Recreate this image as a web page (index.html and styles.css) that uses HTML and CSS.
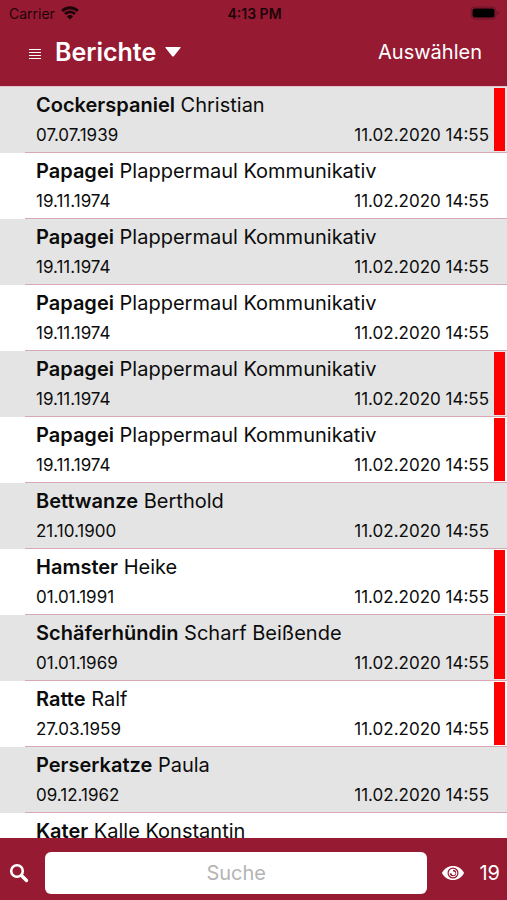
FILE: index.html
```html
<!DOCTYPE html>
<html lang="de">
<head>
<meta charset="utf-8">
<meta name="viewport" content="width=device-width, initial-scale=1">
<title>Berichte</title>
<link rel="stylesheet" href="styles.css">
</head>
<body>
<header class="top">
  <div class="status">
    <span class="carrier">Carrier
      <svg class="wifi" viewBox="0 0 18 14" aria-hidden="true"><path d="M1.200 5a11 11 0 0 1 15.600 0M4 8a7 7 0 0 1 10 0" fill="none" stroke="currentColor" stroke-width="2.800"/><path d="M9 13.600 5.900 10.400a4.400 4.400 0 0 1 6.200 0z" fill="currentColor"/></svg>
    </span>
    <span class="clock">4:13 PM</span>
    <svg class="battery" viewBox="0 0 30 14" aria-hidden="true"><rect x="1" y="1" width="25" height="12" rx="4" fill="none" stroke="#6b1226" stroke-width="1"/><rect x="2.500" y="2.500" width="22" height="9" rx="2.500" fill="#000"/><path d="M27.500 5v4q1.500-.5 1.500-2t-1.500-2z" fill="#6b1226"/></svg>
  </div>
  <nav class="bar">
    <button class="menu" aria-label="Menü"><svg viewBox="0 0 14 12" aria-hidden="true"><path d="M1 1.500h12M1 4.500h12M1 7.500h12M1 10.500h12" stroke="currentColor" stroke-width="1.200"/></svg></button>
    <button class="title">Berichte <svg viewBox="0 0 16 10" aria-hidden="true"><path d="M1 0h14q1.200 0 .4 1L9 9q-1 1-2 0L.6 1Q-.2 0 1 0z" fill="currentColor"/></svg></button>
    <button class="select">Auswählen</button>
  </nav>
</header>
<main class="list">
  <ul>
    <li class="row flag"><div class="cell"><p class="name"><b>Cockerspaniel</b> Christian</p><p class="meta"><span>07.07.1939</span><span>11.02.2020 14:55</span></p></div></li>
    <li class="row"><div class="cell"><p class="name"><b>Papagei</b> Plappermaul Kommunikativ</p><p class="meta"><span>19.11.1974</span><span>11.02.2020 14:55</span></p></div></li>
    <li class="row"><div class="cell"><p class="name"><b>Papagei</b> Plappermaul Kommunikativ</p><p class="meta"><span>19.11.1974</span><span>11.02.2020 14:55</span></p></div></li>
    <li class="row"><div class="cell"><p class="name"><b>Papagei</b> Plappermaul Kommunikativ</p><p class="meta"><span>19.11.1974</span><span>11.02.2020 14:55</span></p></div></li>
    <li class="row flag"><div class="cell"><p class="name"><b>Papagei</b> Plappermaul Kommunikativ</p><p class="meta"><span>19.11.1974</span><span>11.02.2020 14:55</span></p></div></li>
    <li class="row flag"><div class="cell"><p class="name"><b>Papagei</b> Plappermaul Kommunikativ</p><p class="meta"><span>19.11.1974</span><span>11.02.2020 14:55</span></p></div></li>
    <li class="row"><div class="cell"><p class="name"><b>Bettwanze</b> Berthold</p><p class="meta"><span>21.10.1900</span><span>11.02.2020 14:55</span></p></div></li>
    <li class="row flag"><div class="cell"><p class="name"><b>Hamster</b> Heike</p><p class="meta"><span>01.01.1991</span><span>11.02.2020 14:55</span></p></div></li>
    <li class="row flag"><div class="cell"><p class="name"><b>Schäferhündin</b> Scharf Beißende</p><p class="meta"><span>01.01.1969</span><span>11.02.2020 14:55</span></p></div></li>
    <li class="row flag"><div class="cell"><p class="name"><b>Ratte</b> Ralf</p><p class="meta"><span>27.03.1959</span><span>11.02.2020 14:55</span></p></div></li>
    <li class="row"><div class="cell"><p class="name"><b>Perserkatze</b> Paula</p><p class="meta"><span>09.12.1962</span><span>11.02.2020 14:55</span></p></div></li>
    <li class="row"><div class="cell"><p class="name"><b>Kater</b> Kalle Konstantin</p></div></li>
  </ul>
</main>
<footer class="bottom">
  <label for="search" aria-label="Suche"><svg class="loupe" viewBox="0 0 20 20" aria-hidden="true"><circle cx="8" cy="8" r="5.800" fill="none" stroke="currentColor" stroke-width="2.600"/><path d="m12.500 12.500 5 5" stroke="currentColor" stroke-width="3.400" stroke-linecap="round"/></svg></label>
  <input id="search" type="text" placeholder="Suche">
  <button class="count"><svg viewBox="0 0 22 14" aria-hidden="true"><path d="M11 0C6.200 0 2.400 2.700.3 6.300q-.4.700 0 1.400C2.400 11.300 6.200 14 11 14s8.600-2.700 10.700-6.300q.4-.7 0-1.400C19.600 2.700 15.800 0 11 0z" fill="currentColor"/><circle cx="11" cy="7" r="4.900" fill="none" stroke="#971a33" stroke-width="1.200"/><path d="M11 3.800a3.200 3.200 0 1 1-3.200 3.200q2.200 1 3-.4t.2-2.800z" fill="#971a33"/><circle cx="11.500" cy="7.300" r="1.900" fill="currentColor"/></svg><span>19</span></button>
</footer>
</body>
</html>
```
FILE: styles.css
```css
* { box-sizing: border-box; }

body {
  margin: 0;
  height: 100vh;
  display: flex;
  flex-direction: column;
  background: #fff;
  color: #0c0c0c;
  font-family: Inter, "Liberation Sans", sans-serif;
}

button {
  border: 0;
  padding: 0;
  background: none;
  color: inherit;
  font: inherit;
}

svg { display: block; }

.top {
  flex: none;
  background: #971a33;
  color: #fff;
  border-bottom: 1px solid #e3c3c9;
}

.status {
  display: grid;
  grid-template-columns: 1fr auto 1fr;
  align-items: center;
  height: 26px;
  padding: 0 7px 0 9px;
  color: #1c0509;
  font-size: 14px;
}

.carrier {
  display: flex;
  align-items: center;
  gap: 6px;
}

.wifi { width: 18px; height: 14px; }

.clock { font-weight: 600; }

.battery {
  width: 30px;
  height: 14px;
  justify-self: end;
}

.bar {
  display: flex;
  align-items: center;
  height: 60px;
  padding: 0 25px 8px 28px;
}

.menu { padding-top: 4px; }

.menu svg { width: 14px; height: 12px; }

.title {
  display: flex;
  align-items: center;
  gap: 9px;
  margin-left: 13px;
  font-size: 25px;
  font-weight: 600;
}

.title svg { width: 16px; height: 10px; }

.select {
  margin-left: auto;
  font-size: 20px;
}

.list {
  flex: 1;
  min-height: 0;
  overflow: hidden;
}

.list ul {
  margin: 0;
  padding: 0;
  list-style: none;
}

.row {
  position: relative;
  padding-left: 25px;
}

.row:nth-child(odd) { background: #e4e4e4; }

.cell {
  padding: 5px 18px 5px 11px;
  border-bottom: 1px solid #d8a9b2;
}

.name, .meta { margin: 0; }

.name {
  font-size: 20px;
  line-height: 26px;
}

.name b { font-weight: 600; }

.meta {
  display: flex;
  justify-content: space-between;
  padding-top: 5px;
  font-size: 17px;
  line-height: 24px;
}

.flag::after {
  content: "";
  position: absolute;
  top: 1px;
  right: 2px;
  bottom: 2px;
  width: 11px;
  background: #f00;
}

.bottom {
  flex: none;
  display: flex;
  align-items: center;
  height: 62px;
  padding: 7px 7px 0 9px;
  background: #971a33;
  color: #fff;
}

.loupe { width: 20px; height: 20px; }

.bottom input {
  flex: 1;
  min-width: 0;
  height: 42px;
  margin: 0 15px 0 16px;
  padding: 0 8px;
  border: 0;
  border-radius: 6px;
  background: #fff;
  color: #0c0c0c;
  font: inherit;
  font-size: 20px;
  text-align: center;
}

.bottom input::placeholder { color: #b4b4b4; }

.count {
  display: flex;
  align-items: center;
  gap: 15px;
  font-size: 20px;
}

.count svg { width: 22px; height: 14px; }
```
